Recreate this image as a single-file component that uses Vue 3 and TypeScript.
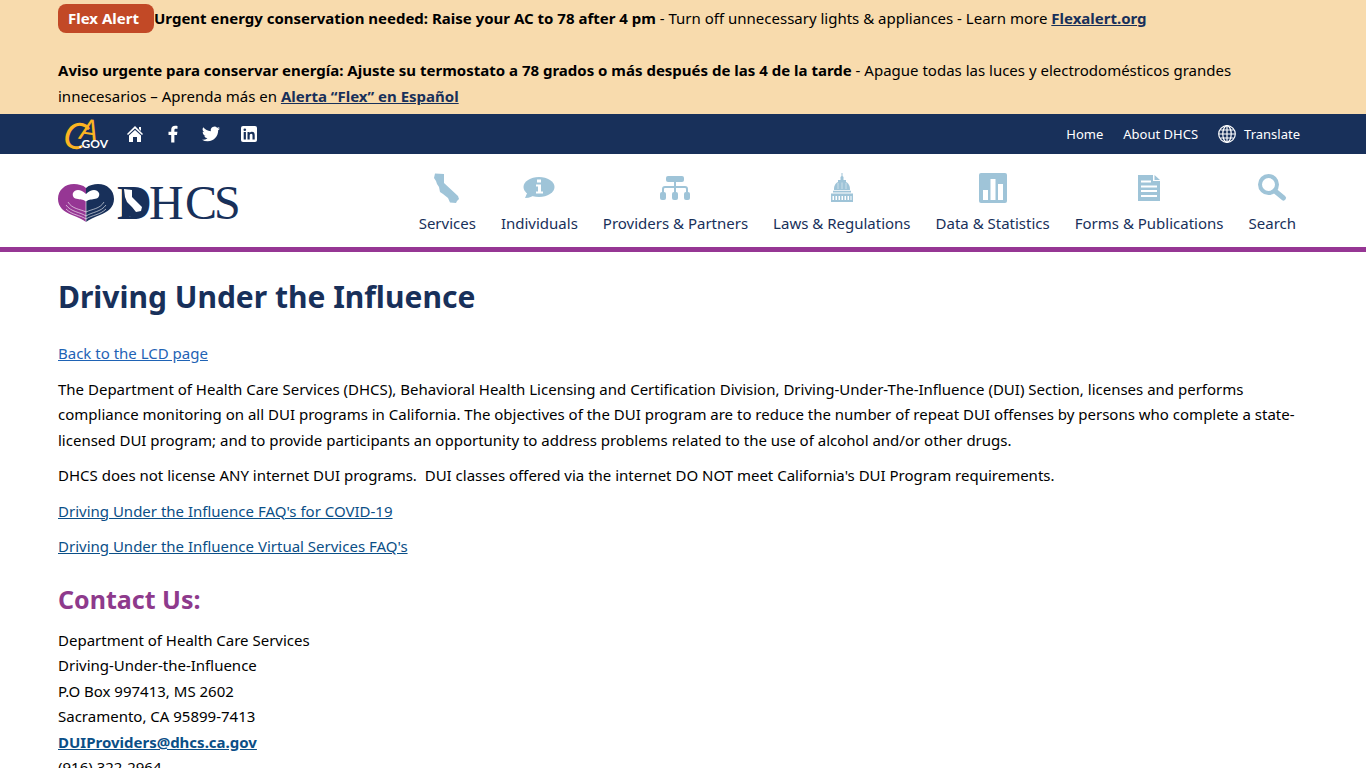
<script setup lang="ts">
interface NavItem {
  label: string
  icon: string
}

const navItems: NavItem[] = [
  { label: 'Services', icon: 'state' },
  { label: 'Individuals', icon: 'info' },
  { label: 'Providers & Partners', icon: 'network' },
  { label: 'Laws & Regulations', icon: 'capitol' },
  { label: 'Data & Statistics', icon: 'chart' },
  { label: 'Forms & Publications', icon: 'form' },
  { label: 'Search', icon: 'search' },
]
</script>

<template>
  <div class="page">
    <section class="alert">
      <p>
        <span class="badge">Flex Alert</span><strong>Urgent energy conservation needed: Raise your AC to 78 after 4 pm</strong>
        - Turn off unnecessary lights &amp; appliances - Learn more <a href="#">Flexalert.org</a>
      </p>
      <p>
        <strong>Aviso urgente para conservar energía: Ajuste su termostato a 78 grados o más después de las 4 de la tarde</strong>
        - Apague todas las luces y electrodomésticos grandes innecesarios – Aprenda más en <a href="#">Alerta “Flex” en Español</a>
      </p>
    </section>

    <div class="utility">
      <div class="social">
        <a href="#" class="cagov" aria-label="CA.gov">
          <svg width="48" height="36" viewBox="0 0 48 36">
            <g class="script">
              <text x="1" y="32" font-size="37" transform="rotate(14 10 20)">C</text>
              <text x="17" y="24" font-size="29" transform="rotate(8 26 14)">A</text>
            </g>
            <text class="gov" x="16" y="32">.GOV</text>
          </svg>
        </a>
        <a href="#" aria-label="Home">
          <svg width="18" height="18" viewBox="0 0 18 18">
            <path d="M9 1 L17 9 L16 10 L9 3.4 L2 10 L1 9 Z M13 2h2v4l-2-2z M9 4.9 L15 10.4 V17 H11 V12 H7 V17 H3 V10.4 Z" fill="#fff" />
          </svg>
        </a>
        <a href="#" aria-label="Facebook">
          <svg width="18" height="18" viewBox="0 0 18 18">
            <path d="M7.200 17.500V10H4.500V6.800H7.200V4.800C7.200 2.100 8.700.8 11.200.8c1.100 0 2 .1 2.300.2v2.700h-1.600c-1.300 0-1.500.6-1.500 1.500v1.600h3l-.4 3.200h-2.600v7.500z" fill="#fff" />
          </svg>
        </a>
        <a href="#" aria-label="Twitter">
          <svg width="18" height="18" viewBox="0 0 24 24">
            <path d="M23.950 4.570a10 10 0 0 1-2.820.770 4.960 4.960 0 0 0 2.160-2.720c-.95.550-2 .960-3.130 1.180a4.920 4.920 0 0 0-8.380 4.480C7.690 8.100 4.070 6.130 1.640 3.160a4.920 4.920 0 0 0 1.520 6.570 4.900 4.900 0 0 1-2.230-.610v.060a4.920 4.920 0 0 0 3.950 4.830 5 5 0 0 1-2.210.080 4.940 4.940 0 0 0 4.600 3.420A9.870 9.870 0 0 1 0 19.540a13.990 13.990 0 0 0 7.550 2.210c9.050 0 14-7.500 14-13.980 0-.21 0-.42-.02-.63a9.940 9.940 0 0 0 2.420-2.570z" fill="#fff" />
          </svg>
        </a>
        <a href="#" aria-label="LinkedIn">
          <svg width="18" height="18" viewBox="0 0 18 18">
            <rect x="1" y="1" width="16" height="16" rx="2" fill="#fff" />
            <g fill="#18305a">
              <circle cx="4.800" cy="4.800" r="1.300" />
              <rect x="3.700" y="7" width="2.200" height="7.500" />
              <path d="M7.500 7h2.100v1c.5-.8 1.300-1.200 2.300-1.200 2 0 2.800 1.200 2.800 3.300v4.400h-2.200v-4c0-1.100-.4-1.800-1.300-1.800-1 0-1.500.8-1.500 1.800v4H7.500z" />
            </g>
          </svg>
        </a>
      </div>
      <nav class="links" aria-label="Utility">
        <a href="#">Home</a>
        <a href="#">About DHCS</a>
        <a href="#" class="translate">
          <svg width="18" height="18" viewBox="0 0 18 18" fill="none" stroke="#fff" stroke-width="1.200">
            <circle cx="9" cy="9" r="8.300" />
            <ellipse cx="9" cy="9" rx="4.200" ry="8.300" />
            <path d="M9 1V17M1 9H17M2.300 5H15.700M2.300 13H15.700" />
          </svg>
          Translate
        </a>
      </nav>
    </div>

    <header class="header">
      <a href="#" class="logo" aria-label="DHCS">
        <svg width="184" height="42" viewBox="0 0 184 42">
          <path d="M28 5C25 2 20 1 16 1C7 1 0 7 0 16C0 24 6 29 14 32C20 34 25 37 28 39Z" fill="#963694" />
          <path d="M28 5C31 2 36 1 40 1C49 1 56 7 56 16C56 24 50 29 42 32C36 34 31 37 28 39Z" fill="#18305a" />
          <path d="M28 19C26 16 23 17 20 16C16 16 14 13 15 10C17 6 23 6 28 11C33 6 39 6 41 10C42 13 40 16 36 16C33 17 30 16 28 19Z" fill="#fff" />
          <g fill="none" stroke="#fff" stroke-width="0.600">
            <path d="M10 19C14 26 22 26 28 29M8 22C13 29 22 29 28 33M8 26C14 32 22 32 28 36" />
            <path d="M46 19C42 26 34 26 28 29M48 22C43 29 34 29 28 33M48 26C42 32 34 32 28 36" />
            <path d="M28 19V39" />
          </g>
          <g class="wordmark">
            <text x="59" y="36" class="initial">D</text>
            <text x="91" y="36">H</text>
            <text x="127" y="36">C</text>
            <text x="156" y="36">S</text>
          </g>
          <ellipse cx="77" cy="20" rx="12" ry="15" fill="#18305a" />
          <path d="M64 5H70V35H64Z" fill="#18305a" />
          <path d="M66 6L74 7V14L84 24L83 28L78 29L74 24L69 19L67 14Z" fill="#fff" />
        </svg>
      </a>
      <nav class="main-nav" aria-label="Main">
        <a v-for="item in navItems" :key="item.label" href="#">
          <svg width="32" height="32" viewBox="0 0 32 32" fill="#9fc4d8">
            <path v-if="item.icon === 'state'" d="M4 1.500L13 2V11L27 24L28 27L26 29L25 31L19 30.500L17 26L12 22L9 20L8 15L6 12L5 9L3 6Z" />
            <template v-else-if="item.icon === 'info'">
              <ellipse cx="16" cy="15" rx="15.500" ry="10" />
              <path d="M5 19L2 26C7 26 10 24 13 22Z" />
              <path d="M14 7.500h4v3h-4zM13 12.500h5v7h2v2h-7v-2h2v-5h-2z" fill="#fff" />
            </template>
            <template v-else-if="item.icon === 'network'">
              <rect x="7" y="4" width="18" height="6" rx="2" />
              <path d="M16 9V22M4 22V17Q4 15 6 15H26Q28 15 28 17V22" fill="none" stroke="#9fc4d8" stroke-width="2" />
              <rect x="1" y="20" width="6" height="8" rx="2" />
              <rect x="13" y="20" width="6" height="8" rx="2" />
              <rect x="25" y="20" width="6" height="8" rx="2" />
            </template>
            <template v-else-if="item.icon === 'capitol'">
              <path d="M15.500 1h1v3l1 1v3H20v2C24 12 24 16 24 18H8C8 16 8 12 12 10V8h2.500V5l1-1z" />
              <path d="M7 18.700H25V20.500H7zM5 21.500H27V24H5zM5 24h1.500v4H5zM8 24h1.500v4H8zM11 24h1.500v4H11zM14 24h1.500v4H14zM17 24h1.500v4H17zM20 24h1.500v4H20zM23 24h1.500v4H23zM25.500 24H27v4h-1.500zM5 28H27v2H5z" />
              <path d="M12 11V17M16 10.500V17M20 11V17" fill="none" stroke="#fff" stroke-width=".5" />
            </template>
            <template v-else-if="item.icon === 'chart'">
              <rect x="2" y="1" width="28" height="30" rx="2" />
              <path d="M6 18h5v10H6zM13.500 7h5v21h-5zM21 12h5v16h-5z" fill="#fff" />
            </template>
            <template v-else-if="item.icon === 'form'">
              <path d="M5 3H20V9H27V29H5zM21.500 3L27 8H21.500z" />
              <path d="M8 9.500H18M8 14.500H24M8 19H24M8 24H24" fill="none" stroke="#fff" stroke-width="2" />
            </template>
            <template v-else>
              <circle cx="12.500" cy="12.500" r="8.500" fill="none" stroke="#9fc4d8" stroke-width="4" />
              <path d="M19 19L27.500 26" fill="none" stroke="#9fc4d8" stroke-width="5" stroke-linecap="round" />
            </template>
          </svg>
          <span>{{ item.label }}</span>
        </a>
      </nav>
    </header>

    <main class="content">
      <h1>Driving Under the Influence</h1>
      <p><a href="#" class="back">Back to the LCD page</a></p>
      <p>
        The Department of Health Care Services (DHCS), Behavioral Health Licensing and Certification Division, Driving-Under-The-Influence (DUI) Section, licenses and performs
        compliance monitoring on all DUI programs in California. The objectives of the DUI program are to reduce the number of repeat DUI offenses by persons who complete a state-licensed
        DUI program; and to provide participants an opportunity to address problems related to the use of alcohol and/or other drugs.
      </p>
      <p>DHCS does not license ANY internet DUI programs.&nbsp; DUI classes offered via the internet DO NOT meet California's DUI Program requirements.</p>
      <p><a href="#">Driving Under the Influence FAQ's for COVID-19</a></p>
      <p><a href="#">Driving Under the Influence Virtual Services FAQ's</a></p>
      <h2>Contact Us:</h2>
      <address>
        Department of Health Care Services<br />
        Driving-Under-the-Influence<br />
        P.O Box 997413, MS 2602<br />
        Sacramento, CA 95899-7413<br />
        <a href="#"><strong>DUIProviders@dhcs.ca.gov</strong></a><br />
        (916) 322-2964
      </address>
    </main>
  </div>
</template>

<style>
body {
  margin: 0;
}
html {
  overflow: hidden;
}
</style>

<style scoped>
.page {
  height: 100vh;
  overflow: hidden;
  background: #fff;
  color: #000;
  font-family: "Noto Sans", "Open Sans", sans-serif;
  font-size: 15px;
  line-height: 1.7;
}
svg {
  overflow: visible;
}
.alert,
.utility,
.header,
.content {
  padding-left: 58px;
  padding-right: 58px;
}
.alert {
  padding-top: 5px;
  padding-bottom: 5px;
  background: #f8dbad;
  line-height: 26px;
}
.alert p {
  margin: 0;
}
.alert p + p {
  margin-top: 26px;
}
.alert strong,
.alert a {
  font-weight: 700;
}
.alert a {
  color: #18305a;
}
.badge {
  display: inline-block;
  box-sizing: border-box;
  width: 96px;
  margin: -1px 0 -2px;
  padding: 1px 10px 2px;
  border-radius: 8px;
  background: #c24926;
  color: #fff;
  font-weight: 700;
  white-space: nowrap;
}
.utility {
  display: flex;
  align-items: center;
  justify-content: space-between;
  height: 40px;
  padding-right: 66px;
  background: #18305a;
}
.social,
.links,
.translate {
  display: flex;
  align-items: center;
}
.social {
  gap: 20px;
  padding-left: 5px;
}
.social a {
  display: flex;
}
.cagov {
  margin-right: -5px;
}
.script {
  fill: #fcb522;
  font-family: Lato, sans-serif;
  font-style: italic;
}
.gov {
  fill: #fff;
  font-family: Lato, sans-serif;
  font-size: 12px;
  font-weight: 700;
}
.links {
  gap: 20px;
  font-size: 13px;
}
.links a {
  color: #fff;
  text-decoration: none;
}
.translate {
  gap: 8px;
}
.header {
  display: flex;
  align-items: center;
  justify-content: space-between;
  padding-top: 18px;
  padding-bottom: 11px;
  padding-right: 70px;
  border-bottom: 5px solid #963694;
}
.logo {
  display: flex;
}
.wordmark {
  fill: #18305a;
  font-family: "Liberation Serif", serif;
  font-size: 48px;
}
.initial {
  font-weight: 700;
}
.main-nav {
  display: flex;
  gap: 25px;
}
.main-nav a {
  display: flex;
  flex-direction: column;
  align-items: center;
  gap: 6px;
  color: #18305a;
  text-decoration: none;
  line-height: 26px;
  white-space: nowrap;
}
.content {
  padding-top: 23px;
}
.content p {
  margin: 0 0 10px;
}
.content a {
  color: #0b4f87;
}
.content a.back {
  color: #1f63b5;
}
h1 {
  margin: 0 0 22px;
  color: #18305a;
  font-size: 30px;
  font-weight: 700;
  line-height: 44px;
}
h2 {
  margin: 19px 0 9px;
  color: #8e3a8c;
  font-size: 25px;
  font-weight: 700;
  line-height: 40px;
}
address {
  font-style: normal;
}
</style>
